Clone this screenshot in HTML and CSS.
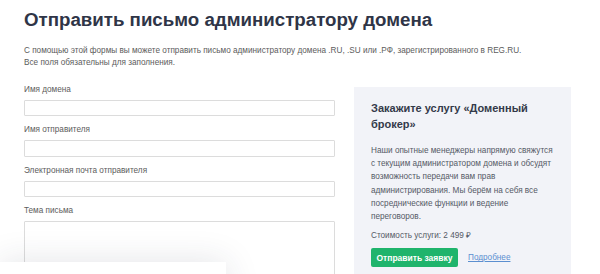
FILE: index.html
```html
<!DOCTYPE html>
<html lang="ru">
<head>
    <meta charset="UTF-8">
    <meta name="viewport" content="width=device-width, initial-scale=1.0">
    <title>Отправить письмо администратору домена</title>
    <link rel="stylesheet" href="styles.css">
</head>
<body>
    <div class="page">
        <h1 class="title">Отправить письмо администратору домена</h1>
        <p class="intro">
            С помощью этой формы вы можете отправить письмо администратору домена .RU, .SU или .РФ, зарегистрированного в REG.RU.<br>
            Все поля обязательны для заполнения.
        </p>

        <div class="content">
            <form class="mail-form">
                <label class="field">
                    <span class="field-label">Имя домена</span>
                    <input class="field-input" type="text" name="domain">
                </label>
                <label class="field">
                    <span class="field-label">Имя отправителя</span>
                    <input class="field-input" type="text" name="name">
                </label>
                <label class="field">
                    <span class="field-label">Электронная почта отправителя</span>
                    <input class="field-input" type="email" name="email">
                </label>
                <label class="field">
                    <span class="field-label">Тема письма</span>
                    <textarea class="field-input field-text" name="subject"></textarea>
                </label>
            </form>

            <aside class="broker">
                <h2 class="broker-title">Закажите услугу «Доменный брокер»</h2>
                <p class="broker-text">Наши опытные менеджеры напрямую свяжутся с текущим администратором домена и обсудят возможность передачи вам прав администрирования. Мы берём на себя все посреднические функции и ведение переговоров.</p>
                <p class="broker-price">Стоимость услуги: 2 499 ₽</p>
                <div class="broker-actions">
                    <button class="btn-green" type="button">Отправить заявку</button>
                    <a class="more-link" href="#">Подробнее</a>
                </div>
            </aside>
        </div>
    </div>

    <div class="popup"></div>
</body>
</html>
```

FILE: styles.css
```css
html, body {
    overflow: hidden;
}
body {
    margin: 0;
    background: #fff;
    font-family: "Liberation Sans", Arial, sans-serif;
    color: #5c5c5c;
}
.page {
    padding: 8px 24px 0;
}
.title {
    margin: 0;
    font-size: 18.7px;
    line-height: 24px;
    font-weight: bold;
    color: #2f3547;
}
.intro {
    margin: 13px 0 0;
    font-size: 8.2px;
    line-height: 12.3px;
    color: #5c5c5c;
}
.content {
    display: flex;
    gap: 19px;
    margin-top: 14px;
}
.mail-form {
    width: 311px;
    flex-shrink: 0;
}
.field {
    display: block;
    margin-bottom: 8px;
}
.field-label {
    display: block;
    font-size: 8.2px;
    line-height: 12px;
    margin-bottom: 4px;
    color: #5c5c5c;
}
.field-input {
    display: block;
    box-sizing: border-box;
    width: 100%;
    height: 16.5px;
    margin: 0;
    border: 1px solid #dcdcdc;
    border-radius: 1px;
    background: #fff;
    font: inherit;
}
.field-text {
    height: 120px;
    resize: none;
}
.broker {
    width: 217px;
    box-sizing: border-box;
    margin-top: 3px;
    padding: 13px 17px 40px;
    background: #f2f3f8;
}
.broker-title {
    margin: 0;
    font-size: 11px;
    line-height: 16px;
    font-weight: bold;
    color: #343a4a;
}
.broker-text {
    margin: 12px 0 0;
    font-size: 8.2px;
    line-height: 13.33px;
    color: #555a66;
}
.broker-price {
    margin: 5px 0 0;
    font-size: 8.2px;
    line-height: 13.33px;
    color: #555a66;
}
.broker-actions {
    display: flex;
    align-items: center;
    gap: 10px;
    margin-top: 6px;
}
.btn-green {
    width: 87px;
    height: 19.5px;
    padding: 0;
    border: none;
    border-radius: 2px;
    background: #1fb46c;
    color: #fff;
    font-family: inherit;
    font-size: 8.5px;
    font-weight: bold;
    cursor: pointer;
}
.more-link {
    font-size: 8.2px;
    color: #5b8fd0;
    text-decoration: underline;
}
.popup {
    position: fixed;
    left: 0;
    top: 262px;
    width: 226px;
    height: 80px;
    background: #fff;
    box-shadow: 0 0 34px rgba(40, 50, 70, 0.13);
}
```
